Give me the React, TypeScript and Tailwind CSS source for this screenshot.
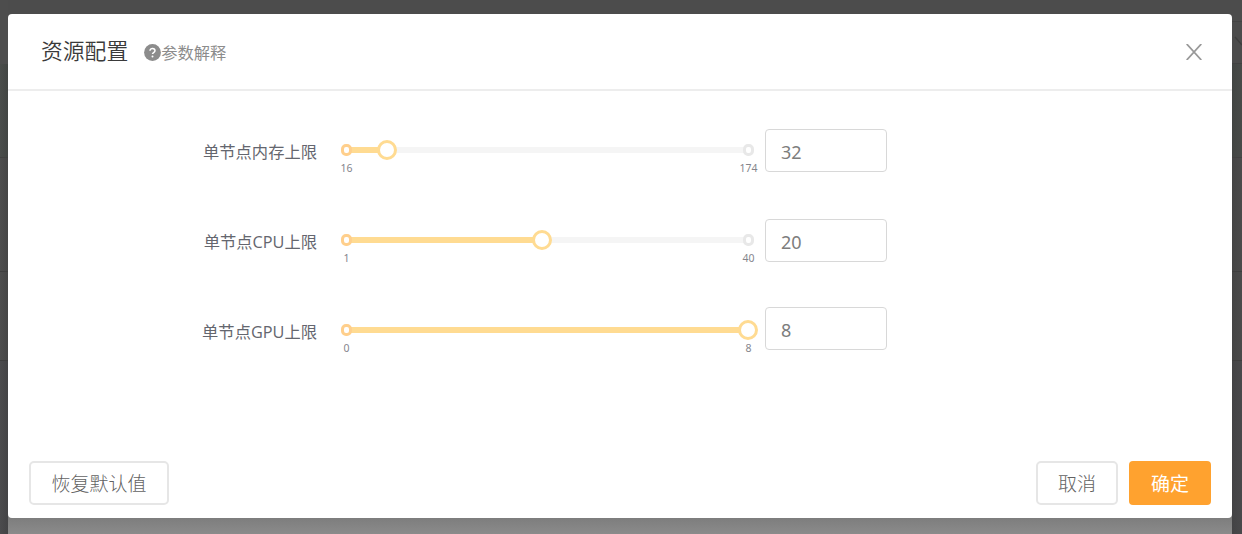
import React from "react";

type Limit = {
  label: string;
  min: number;
  max: number;
  value: number;
  percent: number;
  field: string;
};

const limits: Limit[] = [
  { label: "单节点内存上限", min: 16, max: 174, value: 32, percent: 10.1, field: "mb-px" },
  { label: "单节点CPU上限", min: 1, max: 40, value: 20, percent: 48.7, field: "mb-px" },
  { label: "单节点GPU上限", min: 0, max: 8, value: 8, percent: 100, field: "mb-[5px]" },
];

function Mark({ value, side, active }: { value: number; side: "start" | "end"; active: boolean }) {
  return (
    <div className={`absolute top-0 flex w-10 -translate-x-1/2 flex-col items-center ${side === "start" ? "left-0" : "left-full"}`}>
      <span
        className={`-mt-[3px] h-3 w-[11px] rounded-[5px] border-[3px] bg-white ${active ? "border-[#ffcf8c]" : "border-[#e8e8e8]"}`}
      />
      <span className="ml-px mt-1.5 text-[10.5px] leading-3 text-[#85858c]">{value}</span>
    </div>
  );
}

function Slider({ item }: { item: Limit }) {
  return (
    <div className="relative mb-[3px] ml-[29px] h-1.5 w-[402px] bg-[#f5f5f5]">
      <div className="h-full bg-[#ffdb92]" style={{ width: `${item.percent}%` }} />
      <Mark value={item.min} side="start" active />
      <Mark value={item.max} side="end" active={item.value >= item.max} />
      <span
        className="absolute top-1/2 size-5 -translate-x-1/2 -translate-y-1/2 rounded-full border-[3px] border-[#ffdb92] bg-white"
        style={{ left: `${item.percent}%` }}
      />
    </div>
  );
}

export default function App() {
  return (
    <div className="flex h-[534px] w-[1242px] overflow-hidden bg-[#4b4b4b] font-['Noto_Sans','Noto_Sans_CJK_SC',sans-serif]">
      <div className="w-2 shrink-0 bg-linear-to-r from-[#4d4d4d] to-[#454545]">
        <div className="h-[64px] bg-[#4d4d4d]" />
        <div className="h-[94px] border-b border-[#414141] bg-linear-to-r from-[#4a4d4b] to-[#424543]" />
        <div className="h-[114px] border-b border-[#3e3e3e]" />
        <div className="h-[89px] border-b border-[#3e3e3e]" />
        <div className="h-[173px] bg-linear-to-r from-[#4b4b4d] to-[#434345]" />
      </div>

      <div className="flex w-[1224px] shrink-0 flex-col">
        <div className="h-3.5 shrink-0 bg-[#4c4c4c]" />
        <div className="z-10 -mb-1 flex h-[503.5px] shrink-0 flex-col rounded-[4px] bg-white">
          <header className="flex h-[77px] shrink-0 items-center border-b-2 border-[#ededed] pl-[33px] pr-[30px]">
            <h1 className="mb-0.5 text-[21.8px] font-[350] leading-8 text-[#3a3a3a]">资源配置</h1>
            <div className="ml-4 mt-[2px] flex items-center text-[#8c8c8c]">
              <svg className="mb-px size-[17px]" viewBox="0 0 17 17" fill="none">
                <circle cx="8.5" cy="8.5" r="8.4" fill="#8c8c8c" />
                <path d="M6 6.8c0-3.3 5-3.1 5-.1 0 1.9-2.5 1.8-2.5 3.3" stroke="white" strokeWidth="1.5" />
                <circle cx="8.5" cy="12.4" r="1" fill="white" />
              </svg>
              <span className="text-[16.3px] leading-6">参数解释</span>
            </div>
            <button aria-label="关闭" className="ml-auto">
              <svg className="size-4" viewBox="0 0 16 16" fill="none" stroke="#999999" strokeWidth="1.8">
                <path d="M.7 0 15.3 16M15.3 0 .7 16" />
              </svg>
            </button>
          </header>

          <main className="flex flex-1 flex-col gap-[46px] pt-[38px]">
            {limits.map((item) => (
              <div key={item.label} className="flex h-11 items-center">
                <div className="mt-px w-[309px] text-right font-['Open_Sans','Noto_Sans_CJK_SC',sans-serif] text-[16.3px] leading-6 text-[#64666e]">
                  {item.label}
                </div>
                <Slider item={item} />
                <input
                  readOnly
                  value={item.value}
                  className={`ml-[17px] h-[43px] w-[122px] rounded-[4px] border border-[#d8d8d8] bg-white pl-[15px] pt-0.5 text-[18px] text-[#7d7d7d] outline-none ${item.field}`}
                />
              </div>
            ))}
          </main>

          <footer className="mb-[12.5px] flex h-11 shrink-0 items-center px-[21px] text-[19px] text-[#626262]">
            <button className="h-11 w-[140px] rounded-[5px] border-2 border-[#e6e6e6] pt-0.5 font-light">恢复默认值</button>
            <button className="ml-auto h-11 w-[82px] rounded-[5px] border-2 border-[#e6e6e6] pt-0.5 font-light">取消</button>
            <button className="ml-[11px] h-11 w-[82px] rounded-[4px] bg-[#ffa22f] pt-0.5 text-white">确定</button>
          </footer>
        </div>
        <div className="flex-1 bg-linear-to-b from-[#7a7a7a] to-[#8b8b8b]" />
      </div>

      <div className="w-2.5 shrink-0 bg-linear-to-r from-[#454545] to-[#4b4b4b]">
        <div className="h-[22px] border-b border-[#434343] bg-[#4c4c4c]" />
        <div className="h-[42px] border-b border-[#414141] bg-[#4b4b4b]">
          <svg className="h-10 w-2.5" viewBox="0 0 10 40" fill="none" stroke="#3d3d3d" strokeWidth="1.4">
            <path d="m3 15 7 8" />
          </svg>
        </div>
        <div className="h-[94px] border-b border-[#414141] bg-linear-to-r from-[#424543] to-[#484b49]" />
        <div className="h-[114px] border-b border-[#3e3e3e]" />
        <div className="h-[89px] border-b border-[#3e3e3e]" />
        <div className="h-[173px] bg-linear-to-r from-[#434345] to-[#49494b]" />
      </div>
    </div>
  );
}
